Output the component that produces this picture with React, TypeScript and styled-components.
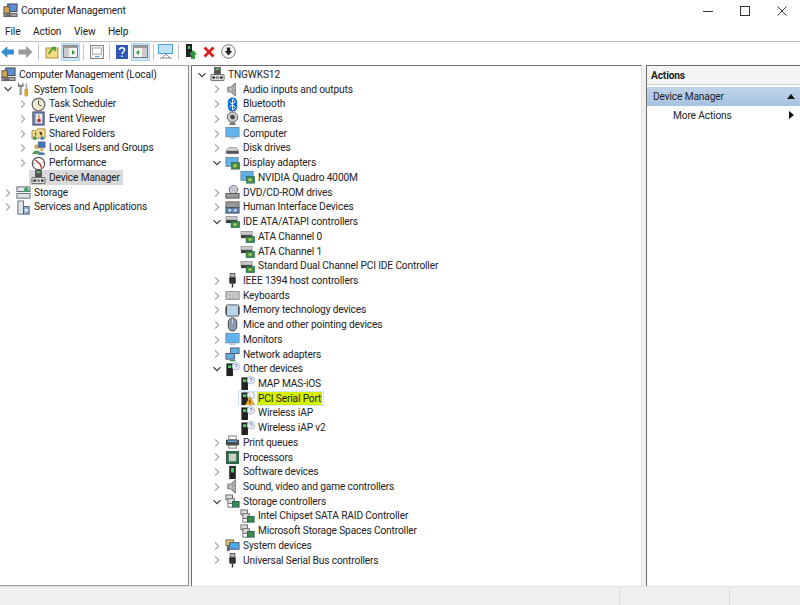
import React from "react";
import styled, { createGlobalStyle } from "styled-components";

const GlobalStyle = createGlobalStyle`
  html, body {
    margin: 0;
    padding: 0;
    background: #fff;
  }
  body {
    font-family: Roboto, "Open Sans", sans-serif;
    font-size: 10.2px;
    letter-spacing: -0.15px;
    color: #222;
  }
`;

const Window = styled.div`
  width: 800px;
  height: 605px;
  display: flex;
  flex-direction: column;
  overflow: hidden;
`;
const TitleBar = styled.div`
  height: 21px;
  display: flex;
  align-items: center;
  padding-left: 3px;
  gap: 3px;
`;
const TitleText = styled.span`
  flex: 1;
`;
const WinButtons = styled.div`
  display: flex;
  align-items: center;
  gap: 27px;
  padding-right: 13px;
  color: #333;
`;
const MenuBar = styled.div`
  height: 21px;
  display: flex;
  align-items: center;
  border-bottom: 1px solid #bfbfbf;
  box-sizing: border-box;
`;
const MenuItem = styled.span<{ $w: number }>`
  width: ${(p) => p.$w}px;
  padding-left: 5px;
  box-sizing: border-box;
`;
const ToolBar = styled.div`
  height: 23px;
  display: flex;
  align-items: center;
  padding-bottom: 4px;
  box-sizing: border-box;
  background: #fff;
`;
const ToolButton = styled.div<{ $w?: number; $on?: boolean }>`
  width: ${(p) => p.$w ?? 18}px;
  height: 18px;
  display: flex;
  align-items: center;
  justify-content: center;
  box-sizing: border-box;
  background: ${(p) => (p.$on ? "#cde6f7" : "transparent")};
  border: 1px solid ${(p) => (p.$on ? "#a8d4f0" : "transparent")};
`;
const ToolSep = styled.div`
  width: 1px;
  height: 16px;
  background: #c4c4c4;
  margin: 0 3px;
`;
const Panes = styled.div`
  flex: 1;
  display: flex;
  min-height: 0;
  background: #f0f0f0;
`;
const LeftPane = styled.div`
  width: 189px;
  background: #fff;
  border-top: 1px solid #a0a0a0;
  border-right: 1px solid #8a8a8a;
  border-bottom: 1px solid #a0a0b0;
  box-sizing: border-box;
  padding-top: 1.4px;
`;
const CenterPane = styled.div`
  width: 451px;
  margin-left: 2px;
  background: #fff;
  border-left: 1px solid #6d6d6d;
  border-top: 1px solid #6d6d6d;
  border-right: 1px solid #e3e3e3;
  box-sizing: border-box;
  padding-top: 1.4px;
`;
const RightPane = styled.div`
  flex: 1;
  margin-left: 4px;
  background: #fff;
  border-left: 1px solid #6d6d6d;
  border-top: 1px solid #6d6d6d;
  box-sizing: border-box;
`;
const Row = styled.div`
  height: 14.72px;
  display: flex;
  align-items: center;
  white-space: nowrap;
`;
const Chevron = styled.svg<{ $x: number }>`
  width: 8px;
  height: 8px;
  margin-left: ${(p) => p.$x}px;
  margin-right: 2px;
  flex: none;
`;
const Item = styled.span<{ $state?: "gray" | "outline" }>`
  display: flex;
  align-items: center;
  height: 14.72px;
  padding: 0 2px;
  box-sizing: border-box;
  background: ${(p) => (p.$state === "gray" ? "#d9d9d9" : "transparent")};
  outline: ${(p) => (p.$state === "outline" ? "1px solid #cfe8f8" : "none")};
  outline-offset: -1px;
`;
const IconBox = styled.span`
  width: 15px;
  height: 14.72px;
  flex: none;
  display: flex;
  align-items: center;
  justify-content: center;
`;
const Label = styled.span<{ $mark?: boolean }>`
  margin-left: 2px;
  padding: 0 1px;
  height: 13.72px;
  line-height: 13.72px;
  background: ${(p) => (p.$mark ? "#d6ee00" : "transparent")};
`;
const ActionsHead = styled.div`
  height: 18px;
  line-height: 20px;
  padding-left: 4px;
  font-weight: 700;
  background: #f4f4f4;
  border-bottom: 1px solid #cfcfcf;
`;
const ActionSection = styled.div`
  margin-top: 2px;
  height: 19px;
  display: flex;
  align-items: center;
  justify-content: space-between;
  padding: 0 5px 0 6px;
  background: linear-gradient(#c0d4ea, #a6c2e0);
`;
const ActionItem = styled.div`
  height: 18px;
  display: flex;
  align-items: center;
  justify-content: space-between;
  padding: 0 6px 0 26px;
`;
const StatusBar = styled.div`
  height: 19px;
  display: flex;
  background: #f0f0f0;
  border-top: 1px solid #e2e2e2;
  box-sizing: border-box;
`;
const StatusCell = styled.div<{ $w: number }>`
  width: ${(p) => p.$w}px;
  border-right: 1px solid #dcdcdc;
  box-sizing: border-box;
`;

type IconKind =
  | "mgmt" | "tools" | "clock" | "event" | "share" | "users" | "perf" | "device"
  | "storage" | "services" | "audio" | "bt" | "cam" | "monitor" | "disk" | "gpu"
  | "dvd" | "hid" | "ide" | "usb" | "kbd" | "mem" | "mouse" | "net" | "other"
  | "warn" | "print" | "cpu" | "soft" | "raid" | "sys";

function DevIcon({ kind }: { kind: IconKind }) {
  const parts: Record<IconKind, React.ReactNode> = {
    mgmt: (<><rect x="5" y="1" width="10" height="8" fill="#5b8fd6" stroke="#444" /><rect x="1" y="4" width="6" height="7" fill="#d4a84a" stroke="#555" /><rect x="1" y="11" width="14" height="3.5" fill="#a8a8a8" stroke="#555" /><rect x="3" y="12.4" width="6" height="1" fill="#333" /></>),
    tools: (<><path d="M5 3v11" stroke="#999" strokeWidth="2.4" /><path d="M2.7 1v3.4h4.6V1" fill="none" stroke="#666" strokeWidth="1.2" /><path d="M11 1.5v7" stroke="#aaa" strokeWidth="1.6" /><rect x="9.5" y="8" width="3" height="7" fill="#e8ac18" stroke="#a67c10" strokeWidth=".5" /></>),
    clock: (<><circle cx="8" cy="8" r="6.7" fill="#efe9cf" stroke="#6f6f6f" strokeWidth="1.4" /><path d="M8 3.6V8l3 1.4" fill="none" stroke="#444" /></>),
    event: (<><rect x="2" y="1" width="12" height="14" fill="#6f8fb8" stroke="#445" /><rect x="5" y="3" width="7" height="10" fill="#eee" /><circle cx="8.5" cy="10" r="2" fill="#c03030" /><path d="M8.5 4v4" stroke="#d09020" strokeWidth="1.5" /></>),
    share: (<><path d="M1 5h5l1-2h8v10H1z" fill="#f0d890" stroke="#b09040" /><path d="M5 7v3M9 7h2v3" stroke="#333" /><circle cx="4" cy="13" r="2" fill="#4a9a5a" /><circle cx="12" cy="13" r="2" fill="#4a8ac0" /></>),
    users: (<><circle cx="6" cy="6" r="2.5" fill="#d8a860" /><path d="M1.5 14c0-5 9-5 9 0z" fill="#5a9a60" /><rect x="8" y="1" width="7" height="6" fill="#3c78c8" stroke="#345" strokeWidth=".6" /><circle cx="11.5" cy="9" r="2.2" fill="#e0b878" /><path d="M8 15c0-4 7-4 7 0z" fill="#4a7ac0" /></>),
    perf: (<><circle cx="8" cy="8" r="6.6" fill="#fff" stroke="#555" strokeWidth="1.3" /><path d="M4.5 4L10 9 11 12.5" fill="none" stroke="#c83030" strokeWidth="1.5" /><path d="M2 8h2M12 7h2" stroke="#888" /></>),
    device: (<><rect x="4.8" y="0.5" width="6.4" height="7.5" fill="#555" stroke="#333" strokeWidth=".6" /><rect x="6" y="1.6" width="4" height="1.6" fill="#5ad070" /><rect x="1" y="8" width="14" height="6.5" rx=".6" fill="#ddd" stroke="#666" /><circle cx="4" cy="11.3" r="1.5" fill="#333" /><circle cx="12" cy="11.3" r="1.5" fill="#333" /><rect x="6.5" y="10" width="3" height="2.8" fill="#888" /></>),
    storage: (<><rect x="1" y="2" width="14" height="5" fill="#dfe7ee" stroke="#667" /><rect x="1" y="9" width="14" height="5" fill="#dfe7ee" stroke="#667" /><circle cx="11" cy="5" r="2.5" fill="#3aa860" /></>),
    services: (<><rect x="2" y="1" width="6" height="14" fill="#dde3ea" stroke="#667" /><rect x="8" y="7" width="6" height="8" fill="#8fb4d8" stroke="#557" /><circle cx="11" cy="11" r="1.5" fill="#fff" /></>),
    audio: (<><path d="M3 5.5h3l5-4.5v14l-5-4.5H3z" fill="#bdbdbd" stroke="#6f6f6f" /><path d="M8.5 3.5v9" stroke="#8a8a8a" /></>),
    bt: (<><rect x="3" y="0.5" width="10" height="15" rx="5" fill="#0a6fd8" /><path d="M5 5l6 6-3 3V2l3 3-6 6" fill="none" stroke="#fff" /></>),
    cam: (<><circle cx="8" cy="6.5" r="5.5" fill="#ccc" stroke="#555" /><circle cx="8" cy="6.5" r="2.5" fill="#444" /><path d="M4 15h8l-2-3H6z" fill="#777" /></>),
    monitor: (<><rect x="1" y="1.5" width="14" height="10" fill="#5fb4ee" stroke="#6b8cab" /><rect x="5" y="12" width="6" height="2" fill="#b9c4cf" /></>),
    disk: (<><path d="M1.5 10l2.5-3h8l2.5 3v3.5h-13z" fill="#d2d2d2" stroke="#888" strokeWidth=".7" /><rect x="1.5" y="10.5" width="13" height="3" fill="#555" /></>),
    gpu: (<><rect x="1" y="1.5" width="13" height="9.5" fill="#63b0e4" stroke="#6b8cab" /><rect x="7" y="7" width="8.5" height="7" fill="#3b8a4a" stroke="#265" strokeWidth=".7" /><rect x="9" y="9" width="3.4" height="3" fill="#c0d048" /></>),
    dvd: (<><circle cx="9" cy="5" r="4.5" fill="#ccd" stroke="#667" /><circle cx="9" cy="5" r="1.2" fill="#fff" stroke="#667" strokeWidth=".5" /><rect x="1" y="9" width="14" height="5" fill="#999" stroke="#555" /></>),
    hid: (<><rect x="1" y="2" width="14" height="6" fill="#999" stroke="#666" /><rect x="1" y="8" width="14" height="6" fill="#5a86b8" stroke="#456" /><circle cx="5" cy="11" r="1.5" fill="#ddd" /><circle cx="11" cy="11" r="1.5" fill="#ddd" /></>),
    ide: (<><rect x="1" y="2.5" width="12" height="4" fill="#c8c8c8" stroke="#888" strokeWidth=".7" /><rect x="1" y="6.5" width="12" height="3.2" fill="#3c3c3c" /><rect x="6.5" y="8" width="9" height="6.5" fill="#3b8a4a" stroke="#265" strokeWidth=".7" /><rect x="9" y="10" width="3.4" height="2.4" fill="#c0d048" /></>),
    usb: (<><rect x="5.5" y="0.5" width="5" height="4" fill="#bbb" stroke="#555" /><rect x="4.5" y="4.5" width="7" height="7" rx="1" fill="#333" /><path d="M8 11.5V15.5" stroke="#333" strokeWidth="1.5" /></>),
    kbd: (<><rect x="1" y="4" width="14" height="8" fill="#dcdcdc" stroke="#777" /><path d="M2.5 6.5h11M2.5 8.5h11M4 10.5h8" stroke="#888" strokeDasharray="1 .6" /></>),
    mem: (<><rect x="1.5" y="2" width="13" height="12" rx="1" fill="#b9d3e6" stroke="#555" /><path d="M1 4v8M15 4v8" stroke="#222" /></>),
    mouse: (<><rect x="3.5" y="1" width="9" height="14" rx="4.5" fill="#8a9bb0" stroke="#444" /><path d="M8 2v5" stroke="#ddd" /></>),
    net: (<><rect x="6" y="1" width="9" height="6" fill="#63b0e4" stroke="#557" /><rect x="1" y="7" width="9" height="6" fill="#63b0e4" stroke="#557" /><path d="M5 14.5h6" stroke="#3a9a50" strokeWidth="1.5" /></>),
    other: (<><rect x="1.5" y="1.5" width="7" height="13.5" fill="#222" /><rect x="3.2" y="3.5" width="3.4" height="3" fill="#4ad060" /><circle cx="11.5" cy="4.5" r="4" fill="#eef2f8" stroke="#8a9ab8" strokeWidth=".7" /><path d="M10.2 3.6c.4-1.5 2.8-1.2 2.7.2 0 .9-1.3 1-1.3 2" fill="none" stroke="#4a6ac0" strokeWidth=".9" /></>),
    warn: (<><rect x="1.5" y="1.5" width="7" height="13.5" fill="#222" /><rect x="3.2" y="3.5" width="3.4" height="3" fill="#4ad060" /><circle cx="11.5" cy="4.5" r="4" fill="#eef2f8" stroke="#8a9ab8" strokeWidth=".7" /><path d="M10.5 6l5.3 9.5H5.2z" fill="#f2b01e" stroke="#9a6a10" strokeWidth=".6" /><path d="M10.5 9.5v3.2M10.5 13.4v1" stroke="#222" /></>),
    print: (<><rect x="4" y="1" width="8" height="4" fill="#fff" stroke="#777" /><rect x="1" y="5" width="14" height="6" fill="#4a4a4a" /><rect x="3" y="6" width="10" height="1.5" fill="#5fb4ee" /><rect x="4" y="11" width="8" height="3" fill="#fff" stroke="#777" /></>),
    cpu: (<><rect x="1.5" y="1.5" width="13" height="13" fill="#2f6a48" stroke="#2f5a40" /><rect x="4" y="4" width="8" height="8" fill="#c9d0c4" /></>),
    soft: (<><rect x="4.5" y="1" width="7" height="14" fill="#222" /><rect x="6.5" y="3" width="3" height="5" fill="#49d860" /></>),
    raid: (<><rect x="1" y="1" width="7" height="5" fill="#ddd" stroke="#666" /><rect x="3" y="5" width="7" height="5" fill="#ddd" stroke="#666" /><rect x="8" y="8" width="7" height="6" fill="#3b8a4a" stroke="#265" /><path d="M3 11v3h5" fill="none" stroke="#666" /></>),
    sys: (<><rect x="1" y="2" width="8" height="6" fill="#d8c070" stroke="#776" /><rect x="5" y="5" width="10" height="7" fill="#4ea8e4" stroke="#557" /><rect x="2" y="8" width="3" height="6" fill="#666" /></>),
  };
  return (
    <svg width="15" height="15" viewBox="0 0 16 16">
      {parts[kind]}
    </svg>
  );
}

type Node = {
  text: string;
  icon: IconKind;
  depth: number;
  open?: boolean;
  leaf?: boolean;
  state?: "gray" | "outline";
};

const leftTree: Node[] = [
  { text: "Computer Management (Local)", icon: "mgmt", depth: -1, leaf: true },
  { text: "System Tools", icon: "tools", depth: 0, open: true },
  { text: "Task Scheduler", icon: "clock", depth: 1 },
  { text: "Event Viewer", icon: "event", depth: 1 },
  { text: "Shared Folders", icon: "share", depth: 1 },
  { text: "Local Users and Groups", icon: "users", depth: 1 },
  { text: "Performance", icon: "perf", depth: 1 },
  { text: "Device Manager", icon: "device", depth: 1, leaf: true, state: "gray" },
  { text: "Storage", icon: "storage", depth: 0 },
  { text: "Services and Applications", icon: "services", depth: 0 },
];

const centerTree: Node[] = [
  { text: "TNGWKS12", icon: "device", depth: 0, open: true },
  { text: "Audio inputs and outputs", icon: "audio", depth: 1 },
  { text: "Bluetooth", icon: "bt", depth: 1 },
  { text: "Cameras", icon: "cam", depth: 1 },
  { text: "Computer", icon: "monitor", depth: 1 },
  { text: "Disk drives", icon: "disk", depth: 1 },
  { text: "Display adapters", icon: "gpu", depth: 1, open: true },
  { text: "NVIDIA Quadro 4000M", icon: "gpu", depth: 2, leaf: true },
  { text: "DVD/CD-ROM drives", icon: "dvd", depth: 1 },
  { text: "Human Interface Devices", icon: "hid", depth: 1 },
  { text: "IDE ATA/ATAPI controllers", icon: "ide", depth: 1, open: true },
  { text: "ATA Channel 0", icon: "ide", depth: 2, leaf: true },
  { text: "ATA Channel 1", icon: "ide", depth: 2, leaf: true },
  { text: "Standard Dual Channel PCI IDE Controller", icon: "ide", depth: 2, leaf: true },
  { text: "IEEE 1394 host controllers", icon: "usb", depth: 1 },
  { text: "Keyboards", icon: "kbd", depth: 1 },
  { text: "Memory technology devices", icon: "mem", depth: 1 },
  { text: "Mice and other pointing devices", icon: "mouse", depth: 1 },
  { text: "Monitors", icon: "monitor", depth: 1 },
  { text: "Network adapters", icon: "net", depth: 1 },
  { text: "Other devices", icon: "other", depth: 1, open: true },
  { text: "MAP MAS-iOS", icon: "other", depth: 2, leaf: true },
  { text: "PCI Serial Port", icon: "warn", depth: 2, leaf: true, state: "outline" },
  { text: "Wireless iAP", icon: "other", depth: 2, leaf: true },
  { text: "Wireless iAP v2", icon: "other", depth: 2, leaf: true },
  { text: "Print queues", icon: "print", depth: 1 },
  { text: "Processors", icon: "cpu", depth: 1 },
  { text: "Software devices", icon: "soft", depth: 1 },
  { text: "Sound, video and game controllers", icon: "audio", depth: 1 },
  { text: "Storage controllers", icon: "raid", depth: 1, open: true },
  { text: "Intel Chipset SATA RAID Controller", icon: "raid", depth: 2, leaf: true },
  { text: "Microsoft Storage Spaces Controller", icon: "raid", depth: 2, leaf: true },
  { text: "System devices", icon: "sys", depth: 1 },
  { text: "Universal Serial Bus controllers", icon: "usb", depth: 1 },
];

function Tree({ nodes, offset }: { nodes: Node[]; offset: number }) {
  return (
    <div>
      {nodes.map((n) => (
        <Row key={n.text}>
          <Chevron $x={offset + n.depth * 15} viewBox="0 0 8 8">
            {!n.leaf && (
              <path
                d={n.open ? "M0.5 2.2L4 5.7L7.5 2.2" : "M2.2 0.5L5.7 4L2.2 7.5"}
                fill="none"
                stroke={n.open ? "#333" : "#a6a6a6"}
                strokeWidth="1.1"
              />
            )}
          </Chevron>
          <Item $state={n.state}>
            <IconBox>
              <DevIcon kind={n.icon} />
            </IconBox>
            <Label $mark={n.state === "outline"}>{n.text}</Label>
          </Item>
        </Row>
      ))}
    </div>
  );
}

const ToolIcons = {
  back: (<svg width="15" height="14" viewBox="0 0 15 14"><path d="M7 1L0.5 7L7 13V9.5H14.5V4.5H7z" fill="#2f8fd8" stroke="#2272b0" strokeWidth=".5" /></svg>),
  forward: (<svg width="15" height="14" viewBox="0 0 15 14"><path d="M8 1L14.5 7L8 13V9.5H0.5V4.5H8z" fill="#9a9a9a" /></svg>),
  up: (<svg width="14" height="14" viewBox="0 0 14 14"><rect x="1" y="3" width="12" height="10" fill="#f2d982" stroke="#b09040" /><path d="M4 9C5 6 7 4 9 3M7 2.5H10V6" fill="none" stroke="#3f9a30" strokeWidth="1.6" /></svg>),
  tree: (<svg width="15" height="13" viewBox="0 0 15 13"><rect x=".5" y=".5" width="14" height="12" fill="#f2f2f2" stroke="#7a7a7a" /><rect x=".5" y=".5" width="14" height="2.5" fill="#999" /><rect x="1" y="3" width="5" height="9" fill="#ccc" /><path d="M9 5v5l3-2.5z" fill="#2e9a3a" /></svg>),
  props: (<svg width="14" height="14" viewBox="0 0 14 14"><rect x=".5" y=".5" width="13" height="13" fill="#f0f0f0" stroke="#888" /><rect x="2.5" y="3" width="9" height="6" fill="#fff" stroke="#aaa" /><rect x="5" y="11" width="4" height="1" fill="#4ca8e0" /></svg>),
  help: (<svg width="12" height="14" viewBox="0 0 12 14"><rect width="12" height="14" fill="#2d57b8" /><path d="M3.5 5C3.5 2 8.5 2 8.5 5C8.5 7 6 7 6 9M6 10.5V12" fill="none" stroke="#fff" strokeWidth="1.5" /></svg>),
  pane: (<svg width="15" height="13" viewBox="0 0 15 13"><rect x=".5" y=".5" width="14" height="12" fill="#f2f2f2" stroke="#7a7a7a" /><rect x=".5" y=".5" width="14" height="2.5" fill="#999" /><rect x="9" y="3" width="5" height="9" fill="#ccc" /><path d="M6 5v5l-3-2.5z" fill="#2e9a3a" /></svg>),
  monitor: (<svg width="16" height="15" viewBox="0 0 16 15"><rect x=".5" y=".5" width="14" height="9" fill="#bfe3f7" stroke="#4a9ed8" /><path d="M8 10L4 14M8 10L12 14" stroke="#888" /><path d="M2 14h12" stroke="#888" /></svg>),
  device: (<svg width="12" height="15" viewBox="0 0 12 15"><rect x="1" y="0" width="6" height="13" fill="#222" /><rect x="3" y="2" width="2" height="3" fill="#4ad060" /><path d="M8 6L12 10.5H10V15H6V10.5H4z" fill="#2f9a3a" /></svg>),
  remove: (<svg width="12" height="12" viewBox="0 0 12 12"><path d="M1.5 1.5L10.5 10.5M10.5 1.5L1.5 10.5" stroke="#d81e1e" strokeWidth="2.8" /></svg>),
  down: (<svg width="15" height="15" viewBox="0 0 15 15"><circle cx="7.5" cy="7.5" r="6.8" fill="#f4f4f4" stroke="#777" /><path d="M5.8 3.5h3.4v3.5h2L7.5 11.5L3.8 7h2z" fill="#222" /></svg>),
};

export default function App() {
  return (
    <>
      <GlobalStyle />
      <Window>
        <TitleBar>
          <DevIcon kind="mgmt" />
          <TitleText>Computer Management</TitleText>
          <WinButtons>
            <svg width="10" height="10" viewBox="0 0 10 10"><path d="M0 5.5h10" stroke="#333" /></svg>
            <svg width="10" height="10" viewBox="0 0 10 10"><rect x=".5" y=".5" width="9" height="9" fill="none" stroke="#333" /></svg>
            <svg width="10" height="10" viewBox="0 0 10 10"><path d="M.5 .5l9 9M9.5 .5l-9 9" stroke="#333" /></svg>
          </WinButtons>
        </TitleBar>
        <MenuBar>
          <MenuItem $w={28}>File</MenuItem>
          <MenuItem $w={41}>Action</MenuItem>
          <MenuItem $w={34}>View</MenuItem>
          <MenuItem $w={40}>Help</MenuItem>
        </MenuBar>
        <ToolBar>
          <ToolButton $w={15}>{ToolIcons.back}</ToolButton>
          <ToolButton $w={20}>{ToolIcons.forward}</ToolButton>
          <ToolSep />
          <ToolButton $w={19}>{ToolIcons.up}</ToolButton>
          <ToolButton $on $w={19}>{ToolIcons.tree}</ToolButton>
          <ToolSep />
          <ToolButton $w={19}>{ToolIcons.props}</ToolButton>
          <ToolSep />
          <ToolButton $w={18}>{ToolIcons.help}</ToolButton>
          <ToolButton $on $w={19}>{ToolIcons.pane}</ToolButton>
          <ToolSep />
          <ToolButton $w={18}>{ToolIcons.monitor}</ToolButton>
          <ToolSep />
          <ToolButton $w={18}>{ToolIcons.device}</ToolButton>
          <ToolButton $w={18}>{ToolIcons.remove}</ToolButton>
          <ToolButton $w={20}>{ToolIcons.down}</ToolButton>
        </ToolBar>
        <Panes>
          <LeftPane>
            <Tree nodes={leftTree} offset={4} />
          </LeftPane>
          <CenterPane>
            <Tree nodes={centerTree} offset={6} />
          </CenterPane>
          <RightPane>
            <ActionsHead>Actions</ActionsHead>
            <ActionSection>
              Device Manager
              <svg width="8" height="5" viewBox="0 0 8 5"><path d="M0 5L4 0L8 5z" fill="#111" /></svg>
            </ActionSection>
            <ActionItem>
              More Actions
              <svg width="5" height="8" viewBox="0 0 5 8"><path d="M0 0L5 4L0 8z" fill="#111" /></svg>
            </ActionItem>
          </RightPane>
        </Panes>
        <StatusBar>
          <StatusCell $w={620} />
          <StatusCell $w={110} />
        </StatusBar>
      </Window>
    </>
  );
}
